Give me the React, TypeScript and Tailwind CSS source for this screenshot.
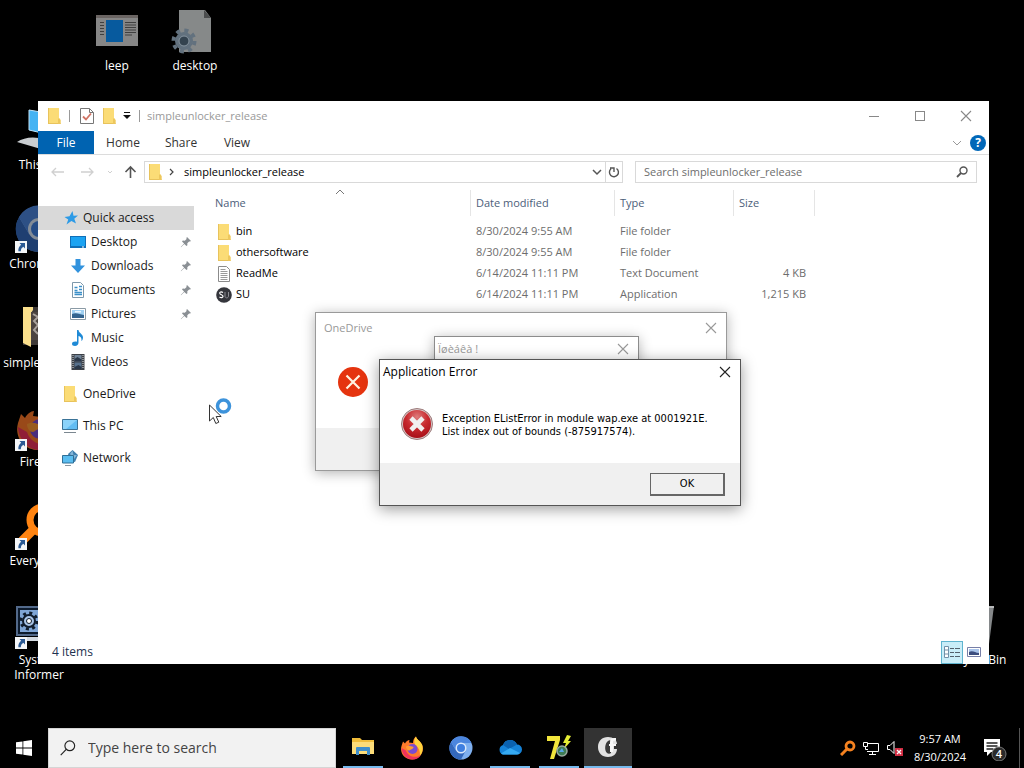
import type { ReactNode } from "react";

const UI = "font-['Open_Sans','Noto_Sans',sans-serif]";

function Folder({ className = "h-4 w-4" }: { className?: string }) {
  return (
    <svg viewBox="0 0 16 16" className={className}>
      <path d="M2 0h11v10l1.500 2v4H2z" fill="#fbdc76" />
      <path d="M2 0h1v16H2zM2 15h12.500v1H2z" fill="#e8c35c" />
      <path d="M12 11l1-1 1.500 2v4H12z" fill="#edc75e" />
    </svg>
  );
}

function Cross({ size, color }: { size: number; color: string }) {
  return (
    <svg width={size} height={size} viewBox="0 0 12 12" fill="none">
      <path d="M1 1l10 10M11 1L1 11" stroke={color} strokeWidth="1.1" />
    </svg>
  );
}

function Pin() {
  return (
    <svg viewBox="0 0 12 12" className="h-3 w-3">
      <path
        d="M7 1l4 4-1 .6-.9-.2-1.800 1.800.1 2L6.500 10 4.300 7.900 1 11.200.8 11 4.100 7.600 2 5.500l.8-.9 2 .1L6.600 3 6.400 2z"
        fill="#8a8f94"
      />
    </svg>
  );
}

function StarIcon() {
  return (
    <svg viewBox="0 0 16 16" className="h-4 w-4">
      <path
        d="M9.500 1l1 4.700 4.500-.2-3.700 3.300L13 13.500 8.400 11 3.500 14.500l1.700-5L1.500 7l5-.8z"
        fill="#2e9be6"
      />
    </svg>
  );
}

function DesktopIcon() {
  return (
    <svg viewBox="0 0 16 16" className="h-4 w-4">
      <path d="M0 2h16v12H0z" fill="#0f6fb8" />
      <path d="M1 3h14v9H1z" fill="#1ba3f2" />
      <path d="M12 12.500h2v1h-2z" fill="#fff" />
    </svg>
  );
}

function DownloadIcon() {
  return (
    <svg viewBox="0 0 16 16" className="h-4 w-4">
      <path d="M5.500 1h5v6.500H15L8 15 1 7.500h4.500z" fill="#3192dd" />
    </svg>
  );
}

function DocumentIcon() {
  return (
    <svg viewBox="0 0 16 16" className="h-4 w-4" fill="none">
      <path d="M2.500.5h8l3 3v12h-11z" fill="#fff" stroke="#7d98ab" />
      <path
        d="M4.500 5.500h3M9 4.500h3M9 7.500h3M4.500 8.500h3M4.500 10.500h7.500M4.500 12.500h7.500"
        stroke="#3a8fc9"
        strokeWidth="1.300"
      />
    </svg>
  );
}

function PictureIcon() {
  return (
    <svg viewBox="0 0 16 16" className="h-4 w-4">
      <path d="M.5 2.500h15v11H.5z" fill="#fff" stroke="#8a9aa5" />
      <path d="M2 4h12v8H2z" fill="#9fd0f2" />
      <path d="M2 8c4-2 7 0 12 1v3H2z" fill="#33648f" />
      <path d="M5 5h6v1.500H5z" fill="#eaf6ff" />
    </svg>
  );
}

function MusicIcon() {
  return (
    <svg viewBox="0 0 16 16" className="h-4 w-4">
      <path
        d="M7 0h1.500c.2 3 4.500 4 4.500 7.500 0 1.500-.7 3-1.600 3.500C12 8 10.500 6.500 8.500 6v6.500C8.500 14.500 7 16 5 16s-3-1-3-2.300C2 12 4.500 11 7 11.800z"
        fill="#1f8ad6"
      />
    </svg>
  );
}

function VideoIcon() {
  return (
    <svg viewBox="0 0 16 16" className="h-4 w-4">
      <path d="M1.500 0h13v16h-13z" fill="#3c4046" />
      <path d="M4.500 1h7v6.500h-7z" fill="#6f8296" />
      <path d="M4.500 8.500h7V15h-7z" fill="#56708c" />
      <path d="M4.500 5l3-2 4 2.500v2h-7zM4.500 13l4-2 3 2v2h-7z" fill="#2a3748" />
      <path
        d="M3 1v14M13 1v14"
        stroke="#d9dcdf"
        strokeWidth="1"
        strokeDasharray="1 1"
      />
    </svg>
  );
}

function ComputerIcon() {
  return (
    <svg viewBox="0 0 16 16" className="h-4 w-4">
      <path d="M.5 1.500h15v10H.5z" fill="#62bdf3" stroke="#3a7397" />
      <path d="M1 2h14L4 11H1z" fill="#8bd3fa" />
      <path d="M2 14h12v1H2z" fill="#7b8790" />
    </svg>
  );
}

function NetworkIcon() {
  return (
    <svg viewBox="0 0 16 16" className="h-4 w-4">
      <path d="M6 4l4.500-4L16 5l-3 7-5-1z" fill="#3f7fae" />
      <path d="M8 4l2.500-3.500 1 4.500 3.500 0-3 4z" fill="#83b5d8" />
      <path d="M.5 5.500h11v7.500H.5z" fill="#5bbdf0" stroke="#2f6f96" />
      <path d="M3 15h6v1H3z" fill="#8996a0" />
    </svg>
  );
}

function TextFileIcon() {
  return (
    <svg viewBox="0 0 16 16" className="h-4 w-4" fill="none">
      <path d="M2.500.5h8l3 3v12h-11z" fill="#fff" stroke="#8b8b8b" />
      <path
        d="M4.500 3.500h5M4.500 5.500h7M4.500 7.500h7M4.500 9.500h7M4.500 11.500h7M4.500 13.500h7"
        stroke="#9a9a9a"
      />
    </svg>
  );
}

function SuIcon() {
  return (
    <svg viewBox="0 0 16 16" className="h-4 w-4" fill="none">
      <circle cx="8" cy="8" r="7.800" fill="#35363c" />
      <path
        d="M7 5.500C5 4.300 3.500 5 3.800 6.400 4.200 8 7 7.500 7 9.300c0 1.500-2 1.800-3.500.7"
        stroke="#fff"
        strokeWidth="1.200"
      />
      <path d="M9 5v4c0 2.500 3.500 2.500 3.500 0V5" stroke="#8b8b92" />
    </svg>
  );
}

function Shortcut() {
  return (
    <svg viewBox="0 0 12 12" className="absolute bottom-0 left-0 h-3 w-3">
      <path d="M0 0h12v12H0z" fill="#f4f6f8" />
      <path
        d="M4.500 2H10v5.500L8.300 5.800C6.500 7 6 8 5.800 10.200H3.400C3 7.500 4.200 5.500 6.200 3.800z"
        fill="#2b5a94"
      />
    </svg>
  );
}

function LeepIcon() {
  return (
    <svg viewBox="0 0 48 48" className="h-12 w-12" fill="none">
      <path d="M3 8h42v31H3z" fill="#868686" />
      <path d="M3 8h42v3H3z" fill="#6b6563" />
      <path d="M13 13h17v22H13z" fill="#075a9e" />
      <path
        d="M7 15.500h4M7 18.500h4M7 21.500h4M7 24.500h4M7 27.500h4M32 15.500h11M32 18h11M32 20.500h11M32 23h11M32 25.500h11M32 28h7"
        stroke="#3f3f3f"
      />
    </svg>
  );
}

function DesktopIniIcon() {
  return (
    <svg viewBox="0 0 48 48" className="h-12 w-12" fill="none">
      <path d="M8 3h26l6 8v34H8z" fill="#868989" />
      <path d="M33 3v8h7z" fill="#4b4d4e" />
      <circle cx="13" cy="34" r="9" fill="#62717e" />
      <circle
        cx="13"
        cy="34"
        r="10.500"
        stroke="#62717e"
        strokeWidth="4"
        strokeDasharray="4 4.250"
      />
      <circle cx="13" cy="34" r="5" fill="#34434f" stroke="#8795a0" />
    </svg>
  );
}

function PcBigIcon() {
  return (
    <svg viewBox="0 0 48 48" className="h-12 w-12">
      <path d="M14 4l30 5v22l-30-7z" fill="#45b3f3" stroke="#bfe4fa" />
      <path d="M2 36q9-6 22-4l18 5-16 6z" fill="#c9cdd0" />
    </svg>
  );
}

function ChromiumIcon({ className = "h-12 w-12" }: { className?: string }) {
  return (
    <svg viewBox="0 0 48 48" className={className}>
      <circle cx="24" cy="24" r="23" fill="#7fb0ef" />
      <path d="M4 12A23 23 0 0 0 24 47l9-17-9-6-10 5z" fill="#3469bd" />
      <path d="M4 12a23 23 0 0 1 41 2H24L14 29z" fill="#4c86de" />
      <circle cx="24" cy="24" r="11" fill="#dbe9fb" />
      <circle cx="24" cy="24" r="8" fill="#3f7fe0" />
    </svg>
  );
}

function FirefoxIcon({ className = "h-12 w-12" }: { className?: string }) {
  return (
    <svg viewBox="0 0 48 48" className={className}>
      <path
        d="M6 11l4 4c2-4 6-7 9-7l-1 5 8 1C26 8 28 4 32 1c1 6 8 8 12 16 6 14-4 29-19 30C9 48-1 34 3 20z"
        fill="#ff7a2b"
      />
      <path d="M32 1c1 6 8 8 12 16 3 8 1 17-4 22 0-9-2-15-8-20-5-5-4-13 0-18z" fill="#ffd43d" />
      <path d="M3 24c1 14 11 23 22 23 8 0 14-4 17-9-10 7-26 4-30-9z" fill="#f0325c" />
      <circle cx="25" cy="26" r="10" fill="#7b4bd0" />
      <path d="M12 21c6-3 10 0 15 1 0 4-5 4-7 6-3 3-8-1-8-7z" fill="#ff9a35" />
    </svg>
  );
}

function ArchiveFolderIcon() {
  return (
    <svg viewBox="0 0 48 48" className="h-12 w-12">
      <path d="M8 3h30v38H8z" fill="#3f3a38" />
      <path d="M8 3h10v3l-2 3v34l-8-4z" fill="#fbe08c" />
      <path d="M16 8h11v28H16z" fill="#4c4441" />
      <path d="M18 10l5 3-4 4 4 4-4 5 4 4" fill="none" stroke="#a9a29c" strokeWidth="2" />
    </svg>
  );
}

function EverythingIcon() {
  return (
    <svg viewBox="0 0 48 48" className="h-12 w-12" fill="none">
      <circle cx="28" cy="18" r="13" stroke="#ff8412" strokeWidth="7" />
      <path d="M18 28L7 39" stroke="#ff8412" strokeWidth="9" />
    </svg>
  );
}

function InformerIcon() {
  return (
    <svg viewBox="0 0 48 48" className="h-12 w-12" fill="none">
      <path d="M2 6h42v28H2z" fill="#7fa5d5" stroke="#52698a" strokeWidth="2" />
      <path d="M4 8h38v24H4z" stroke="#0c1a2c" strokeWidth="2" />
      <circle cx="14" cy="20" r="6" fill="#a8c3e6" stroke="#111d2d" strokeWidth="2" />
      <circle
        cx="14"
        cy="20"
        r="8"
        stroke="#111d2d"
        strokeWidth="3"
        strokeDasharray="3 3.280"
      />
      <circle cx="14" cy="20" r="2.500" fill="#fff" stroke="#111d2d" />
      <path d="M12 36h24v4H12z" fill="#d5dbe2" />
    </svg>
  );
}

function BinIcon() {
  return (
    <svg viewBox="0 0 48 48" className="h-12 w-12">
      <path d="M6 5h37l-5 38H11z" fill="#85888a" />
      <path d="M6 5h37v2H6z" fill="#b9bbbc" />
    </svg>
  );
}

const shortcuts: {
  label: string;
  cell: string;
  icon: ReactNode;
  linked?: boolean;
}[] = [
  { label: "leep", cell: "col-start-2 row-start-1", icon: <LeepIcon /> },
  { label: "desktop", cell: "col-start-3 row-start-1", icon: <DesktopIniIcon /> },
  { label: "This PC", cell: "col-start-1 row-start-2", icon: <PcBigIcon /> },
  {
    label: "Chromium",
    cell: "col-start-1 row-start-3",
    icon: <ChromiumIcon className="h-12 w-12 opacity-60" />,
    linked: true,
  },
  { label: "simpleunlo...", cell: "col-start-1 row-start-4", icon: <ArchiveFolderIcon /> },
  {
    label: "Firefox",
    cell: "col-start-1 row-start-5",
    icon: <FirefoxIcon className="h-12 w-12 opacity-60" />,
    linked: true,
  },
  { label: "Everything", cell: "col-start-1 row-start-6", icon: <EverythingIcon />, linked: true },
  { label: "System Informer", cell: "col-start-1 row-start-7", icon: <InformerIcon />, linked: true },
  { label: "Recycle Bin", cell: "-col-end-1 row-start-7", icon: <BinIcon /> },
];

function Desktop() {
  return (
    <div className="grid auto-rows-[99px] grid-cols-[repeat(auto-fill,78px)] pt-[7px]">
      {shortcuts.map((s) => (
        <button
          key={s.label}
          className={`flex flex-col items-center text-xs leading-[15px] text-white ${s.cell}`}
        >
          <span className="relative block">
            {s.icon}
            {s.linked && <Shortcut />}
          </span>
          <span className="mt-[3px] px-1">{s.label}</span>
        </button>
      ))}
    </div>
  );
}

const quickAccess = [
  { label: "Desktop", icon: <DesktopIcon />, pinned: true },
  { label: "Downloads", icon: <DownloadIcon />, pinned: true },
  { label: "Documents", icon: <DocumentIcon />, pinned: true },
  { label: "Pictures", icon: <PictureIcon />, pinned: true },
  { label: "Music", icon: <MusicIcon />, pinned: false },
  { label: "Videos", icon: <VideoIcon />, pinned: false },
];

const places = [
  { label: "OneDrive", icon: <Folder /> },
  { label: "This PC", icon: <ComputerIcon /> },
  { label: "Network", icon: <NetworkIcon /> },
];

const files = [
  { name: "bin", date: "8/30/2024 9:55 AM", type: "File folder", size: "", icon: <Folder /> },
  { name: "othersoftware", date: "8/30/2024 9:55 AM", type: "File folder", size: "", icon: <Folder /> },
  { name: "ReadMe", date: "6/14/2024 11:11 PM", type: "Text Document", size: "4 KB", icon: <TextFileIcon /> },
  { name: "SU", date: "6/14/2024 11:11 PM", type: "Application", size: "1,215 KB", icon: <SuIcon /> },
];

function Sidebar() {
  return (
    <nav className="w-[156px] shrink-0 pt-[17px]">
      <a href="#quick" className="flex h-6 items-center gap-1 bg-[#d9d9d9] pl-[25px]">
        <StarIcon />
        Quick access
      </a>
      {quickAccess.map((q) => (
        <a key={q.label} href="#folder" className="flex h-6 items-center gap-[5px] pl-8">
          {q.icon}
          <span className="flex-1">{q.label}</span>
          {q.pinned && (
            <span className="mr-[2px]">
              <Pin />
            </span>
          )}
        </a>
      ))}
      {places.map((p) => (
        <a key={p.label} href="#place" className="mt-2 flex h-6 items-center gap-[5px] pl-6">
          {p.icon}
          {p.label}
        </a>
      ))}
    </nav>
  );
}

function FileTable() {
  const th = "h-[26px] border-r border-[#e5e5e5] pl-[5px] font-normal";
  return (
    <table className="ml-3 table-fixed border-separate border-spacing-0 text-left text-[11px] text-[#6d6d6d]">
      <thead className="text-[#4c607a]">
        <tr>
          <th className={`relative w-[265px] ${th}`}>
            <span className="pl-1">Name</span>
            <svg viewBox="0 0 10 6" className="absolute -top-px left-[129px] h-[6px] w-[10px]" fill="none">
              <path d="M1 5l4-4 4 4" stroke="#777" />
            </svg>
          </th>
          <th className={`w-36 ${th}`}>Date modified</th>
          <th className={`w-[119px] ${th}`}>Type</th>
          <th className={`w-[81px] ${th}`}>Size</th>
        </tr>
      </thead>
      <tbody>
        <tr aria-hidden="true">
          <td className="h-[5px]" colSpan={4} />
        </tr>
        {files.map((f) => (
          <tr key={f.name} className="h-[21px]">
            <td className="pl-[10px] text-black">
              <span className="flex items-center gap-1">
                {f.icon}
                {f.name}
              </span>
            </td>
            <td className="pl-[5px]">{f.date}</td>
            <td className="pl-[5px]">{f.type}</td>
            <td className="pr-[9px] text-right">{f.size}</td>
          </tr>
        ))}
      </tbody>
    </table>
  );
}

function Explorer() {
  return (
    <section className="absolute top-[101px] right-[35px] bottom-16 left-[38px] flex flex-col bg-white text-xs text-[#1a1a1a]">
      <header className="flex h-[30px] items-center">
        <div className="flex flex-1 items-center text-[11px] text-[#999]">
          <Folder className="ml-2 h-4 w-4" />
          <span className="ml-[7px] h-3 w-px bg-[#999]" />
          <svg viewBox="0 0 14 16" className="ml-[10px] h-4 w-[14px]" fill="none">
            <path d="M.5.5h9l4 4v11H.5z" fill="#fff" stroke="#777" />
            <path d="M9.500.5v4h4" stroke="#777" />
            <path d="M3 8.500l3 3 5-6" stroke="#d07465" strokeWidth="1.800" />
          </svg>
          <Folder className="ml-[7px] h-4 w-4" />
          <svg viewBox="0 0 8 8" className="ml-[6px] h-2 w-2">
            <path d="M1 0h6v1H1zM0 3h8L4 7z" fill="#111" />
          </svg>
          <span className="mr-[7px] ml-2 h-3 w-px bg-[#999]" />
          simpleunlocker_release
        </div>
        <button aria-label="Minimize" className="flex h-full w-[46px] items-center justify-center">
          <span className="h-px w-[10px] bg-[#888]" />
        </button>
        <button aria-label="Maximize" className="flex h-full w-[46px] items-center justify-center">
          <span className="h-[10px] w-[10px] border border-[#888]" />
        </button>
        <button aria-label="Close" className="flex h-full w-[46px] items-center justify-center">
          <Cross size={12} color="#888" />
        </button>
      </header>

      <div className="flex h-6 items-stretch border-b border-[#dcdcdc] text-[#333]">
        <button className="w-14 bg-[#0063b1] text-white">File</button>
        <button className="w-[58px]">Home</button>
        <button className="w-[58px]">Share</button>
        <button className="w-[54px]">View</button>
        <span className="flex-1" />
        <button aria-label="Expand ribbon" className="px-2">
          <svg viewBox="0 0 10 6" className="h-[6px] w-[10px]" fill="none">
            <path d="M1 1l4 4 4-4" stroke="#999" />
          </svg>
        </button>
        <button
          aria-label="Help"
          className="mr-[3px] h-4 w-4 self-center rounded-full bg-[#0067b8] text-xs leading-4 font-bold text-white"
        >
          ?
        </button>
      </div>

      <div className="flex h-[34px] items-center text-[11px]">
        <div className="flex w-[106px] items-center">
          <svg viewBox="0 0 106 14" className="h-[14px] w-[106px]" fill="none">
            <path d="M14 7h12M18 3l-4 4 4 4M43 7h12M51 3l4 4-4 4" stroke="#d0d0d0" strokeWidth="1.300" />
            <path d="M70 6l2 2 2-2" stroke="#d0d0d0" />
            <path d="M92.500 13V2M87.500 7l5-5 5 5" stroke="#555" strokeWidth="1.600" />
          </svg>
        </div>
        <div className="flex h-[22px] flex-[477] items-center border border-[#d9d9d9] text-black">
          <Folder className="ml-[2px] h-4 w-4" />
          <svg viewBox="0 0 6 8" className="mx-[6px] h-2 w-[6px]" fill="none">
            <path d="M1 1l3 3-3 3" stroke="#444" strokeWidth="1.200" />
          </svg>
          <span className="flex-1 pl-[3px]">simpleunlocker_release</span>
          <svg viewBox="0 0 10 7" className="mr-[3px] h-[7px] w-[10px]" fill="none">
            <path d="M1 1l4 4 4-4" stroke="#555" strokeWidth="1.500" />
          </svg>
          <button
            aria-label="Refresh"
            className="flex h-full w-[17px] items-center justify-center border-l border-[#d9d9d9]"
          >
            <svg viewBox="0 0 12 12" className="h-3 w-3" fill="none">
              <path d="M3 2.800a4.500 4.500 0 1 0 5.500-.300M2 2h4v4" stroke="#555" strokeWidth="1.400" />
            </svg>
          </button>
        </div>
        <label className="mr-3 ml-3 flex h-[22px] flex-[324] items-center border border-[#d9d9d9] pr-2 pl-2">
          <input
            aria-label="Search simpleunlocker_release"
            placeholder="Search simpleunlocker_release"
            className="min-w-0 flex-1 outline-none placeholder:text-[#6d6d6d]"
          />
          <svg viewBox="0 0 12 12" className="h-3 w-3" fill="none">
            <circle cx="7.500" cy="4.500" r="3.500" stroke="#555" strokeWidth="1.400" />
            <path d="M5 7L1 11" stroke="#555" strokeWidth="1.800" />
          </svg>
        </label>
      </div>

      <div className="flex min-h-0 flex-1">
        <Sidebar />
        <div className="pt-px">
          <FileTable />
        </div>
      </div>

      <footer className="flex h-6 items-center pr-1 pl-[14px] text-[#1e3250]">
        <span className="flex-1">4 items</span>
        <button
          aria-label="Details"
          className="flex h-[23px] w-[22px] items-center justify-center border border-[#5fb4cf] bg-[#c9edf8]"
        >
          <svg viewBox="0 0 18 14" className="h-[14px] w-[18px]" fill="none">
            <path d="M1.500 1.500h4v11h-4zM1.500 5h4M1.500 9h4" fill="#fff" stroke="#7290a8" />
            <path d="M7 3.500h4M12 3.500h5M7 7.500h4M12 7.500h5M7 11.500h4M12 11.500h5" stroke="#53606c" />
          </svg>
        </button>
        <button aria-label="Large icons" className="flex h-[23px] w-[22px] items-center justify-center">
          <svg viewBox="0 0 14 12" className="h-3 w-[14px]">
            <path d="M.5 1.500h13v9H.5z" fill="#fff" stroke="#777fa8" />
            <path d="M2 3h10v6H2z" fill="#a9c4ea" />
            <path d="M2 6c4-2 6 1 10 1v2H2z" fill="#3c4d7e" />
          </svg>
        </button>
      </footer>
    </section>
  );
}

function OneDriveDialog() {
  return (
    <div
      role="dialog"
      aria-label="OneDrive"
      className="absolute top-[312px] left-[315px] flex h-[159px] w-[412px] flex-col border border-[#9a9a9a] bg-white text-xs shadow-[0_2px_12px_rgba(0,0,0,0.3)]"
    >
      <div className="flex h-[30px] items-center justify-between pr-[9px] pl-2 text-[11px] text-[#999]">
        OneDrive
        <button aria-label="Close">
          <Cross size={12} color="#999" />
        </button>
      </div>
      <div className="flex flex-1 items-center pb-2 pl-[22px]">
        <svg viewBox="0 0 30 30" className="h-[30px] w-[30px]">
          <circle cx="15" cy="15" r="15" fill="#e5340f" />
          <path d="M8.500 8.500l13 13M21.500 8.500l-13 13" stroke="#fff3e2" strokeWidth="2.200" />
        </svg>
      </div>
      <div className="h-[42px] bg-[#f0f0f0]" />
    </div>
  );
}

function MojibakeDialog() {
  return (
    <div
      role="dialog"
      aria-label="Ïøèáêà !"
      className="absolute top-[336px] left-[434px] h-[120px] w-[205px] border border-[#8c8c8c] bg-white text-[11px] shadow-[0_2px_12px_rgba(0,0,0,0.3)]"
    >
      <div className="flex h-6 items-center justify-between pr-[9px] pl-[3px] text-[#999]">
        Ïøèáêà !
        <button aria-label="Close">
          <Cross size={12} color="#999" />
        </button>
      </div>
    </div>
  );
}

function ErrorDialog() {
  return (
    <div
      role="dialog"
      aria-label="Application Error"
      className="absolute top-[359px] left-[379px] flex h-[147px] w-[362px] flex-col border border-[#555] bg-white text-xs text-black shadow-[0_3px_14px_rgba(0,0,0,0.4)]"
    >
      <div className="flex h-6 items-center justify-between pr-[9px] pl-[3px]">
        Application Error
        <button aria-label="Close">
          <Cross size={12} color="#222" />
        </button>
      </div>
      <div className="flex flex-1 items-center gap-[9px] pl-[21px]">
        <svg viewBox="0 0 32 32" className="h-8 w-8">
          <defs>
            <radialGradient id="stop" cx="50%" cy="25%" r="75%">
              <stop offset="0" stopColor="#dd7d7d" />
              <stop offset="0.5" stopColor="#c92b30" />
              <stop offset="1" stopColor="#a80f18" />
            </radialGradient>
          </defs>
          <circle cx="16" cy="16" r="15.500" fill="#d9c6c6" stroke="#9c7b7b" />
          <circle cx="16" cy="16" r="14" fill="url(#stop)" />
          <path d="M10 10l12 12M22 10L10 22" stroke="#f1efef" strokeWidth="4.600" />
        </svg>
        <p className="pt-[2px] font-['DejaVu_Sans_Condensed','DejaVu_Sans',sans-serif] text-[11px] leading-[13px]">
          Exception EListError in module wap.exe at 0001921E.
          <br />
          List index out of bounds (-875917574).
        </p>
      </div>
      <div className="flex h-[42px] items-center justify-end bg-[#f0f0f0] pr-[15px]">
        <button className="h-[23px] w-[75px] border border-r-2 border-b-2 border-[#666] bg-[#f0f0f0] pt-[2px] font-['DejaVu_Sans_Condensed','DejaVu_Sans',sans-serif] text-[11px]">
          OK
        </button>
      </div>
    </div>
  );
}

function Cursor() {
  return (
    <svg viewBox="0 0 26 30" className="absolute top-[397px] left-[208px] h-[30px] w-[26px]">
      <path d="M1.500 8v16l3.800-3.500 2.500 6 3-1.300-2.600-5.700h5z" fill="#fff" stroke="#333" />
      <circle cx="15.500" cy="9" r="6" fill="#fff" stroke="#3d93db" strokeWidth="3.500" />
    </svg>
  );
}

const apps: { name: string; state: "idle" | "running" | "active"; icon: ReactNode }[] = [
  {
    name: "File Explorer",
    state: "running",
    icon: (
      <svg viewBox="0 0 24 24" className="h-6 w-6">
        <path d="M1 3h8l2 2h12v14H1z" fill="#f0bd3a" />
        <path d="M1 7h22v12H1z" fill="#fcdc79" />
        <path d="M5 13q0-1 1-1h12q1 0 1 1v7h-3v-4H8v4H5z" fill="#3f8ecb" />
      </svg>
    ),
  },
  { name: "Firefox", state: "idle", icon: <FirefoxIcon className="h-6 w-6" /> },
  { name: "Chromium", state: "idle", icon: <ChromiumIcon className="h-6 w-6" /> },
  {
    name: "OneDrive",
    state: "running",
    icon: (
      <svg viewBox="0 0 24 24" className="h-6 w-6">
        <path d="M5 19.500a5 5 0 0 1 0-9.500 7.500 7.500 0 0 1 14-.500 5 5 0 0 1 0 10z" fill="#1583d8" />
        <path d="M5 10a7.500 7.500 0 0 1 14-.500L11 14z" fill="#0b62b0" />
        <path d="M3 18.500l9-5.500 10 5q-1 1.500-3 1.500H5q-1 0-2-1z" fill="#35aaf2" />
      </svg>
    ),
  },
  {
    name: "7+ Taskbar Tweaker",
    state: "running",
    icon: (
      <svg viewBox="0 0 24 24" className="h-6 w-6">
        <path d="M0 1h13v4L7 24H3l5-18H0z" fill="#f2e63c" />
        <path d="M20 0l-4 8h3l-2 6 7-8h-3l3-5z" fill="#e6ee35" />
        <circle cx="15" cy="16" r="5" fill="#3e7c54" stroke="#98aba0" strokeWidth="1.500" />
        <path d="M12 17l3-4 2 4z" fill="#58a5e8" />
      </svg>
    ),
  },
  {
    name: "wap",
    state: "active",
    icon: (
      <svg viewBox="0 0 24 24" className="h-6 w-6" fill="none">
        <path
          d="M12 2C6 2 2 6 2 12s4 10 10 10c5 0 9-3 9-8h-3V9h3c0-4-4-7-9-7z"
          fill="#e2e2e2"
        />
        <path d="M12 6c-3 2-4 9-1 12 1 1 3 1 4 0v-7h3V9h-3V6c0-1-2-1-3 0z" fill="#3a3a3a" />
        <path d="M18 3c-3 0-4 1.500-4 4v2h-1v2h1v6h3v-6h3V9h-3V7c0-1 1-1.500 3-1V3z" fill="#f7f7f7" />
      </svg>
    ),
  },
];

function Taskbar() {
  return (
    <footer className="relative flex h-10 shrink-0 items-stretch bg-black text-xs text-white">
      <button aria-label="Start" className="flex w-12 items-center justify-center">
        <svg viewBox="0 0 16 16" className="h-4 w-4">
          <path d="M0 2.300L6.500 1.400v6.100H0zM7.300 1.300L16 0v7.500H7.300zM0 8.400h6.500v6.200L0 13.700zM7.300 8.400H16V16l-8.700-1.300z" fill="#fff" />
        </svg>
      </button>
      <label className="flex w-72 items-center gap-3 border border-[#d5d5d5] bg-[#f2f2f2] pl-[11px]">
        <svg viewBox="0 0 18 18" className="h-[18px] w-[16px]" fill="none">
          <circle cx="11" cy="6.500" r="5.500" stroke="#222" strokeWidth="1.300" />
          <path d="M7 10.500L.8 17" stroke="#222" strokeWidth="1.300" />
        </svg>
        <input
          aria-label="Type here to search"
          placeholder="Type here to search"
          className="min-w-0 flex-1 text-sm outline-none placeholder:text-[#444]"
        />
      </label>
      <div className="ml-[3px] flex gap-px">
        {apps.map((a) => (
          <button
            key={a.name}
            aria-label={a.name}
            className={`flex w-12 flex-col items-center ${a.state === "active" ? "bg-[#333]" : ""}`}
          >
            <span className="flex flex-1 items-center">{a.icon}</span>
            {a.state === "running" && <span className="h-[2px] w-10 bg-[#76b9ed]" />}
            {a.state === "active" && <span className="h-[2px] w-full bg-[#76b9ed]" />}
          </button>
        ))}
      </div>
      <div className="ml-auto flex items-center">
        <svg viewBox="0 0 16 16" className="h-4 w-4" fill="none">
          <circle cx="10" cy="6" r="4" stroke="#f58220" strokeWidth="2.800" />
          <path d="M7 9l-6 6" stroke="#f58220" strokeWidth="3" />
        </svg>
        <svg viewBox="0 0 18 16" className="ml-[6px] h-4 w-[18px]" fill="none">
          <path d="M5 3.500h11.500v8H5M10.500 11.500v3M7 14.500h7M1.500 2.500h4v4h-4zM3.500 6.500v3h2.500" stroke="#fff" />
        </svg>
        <svg viewBox="0 0 18 16" className="ml-[6px] h-4 w-[18px]" fill="none">
          <path d="M1.500 5.500H4l4-4v12l-4-4H1.500z" stroke="#fff" />
          <path d="M9 8h8v8H9z" fill="#d12d43" />
          <path d="M11 10l4 4M15 10l-4 4" stroke="#fff" strokeWidth="1.300" />
        </svg>
        <div className="ml-2 w-[56px] text-center text-[11px] leading-[18px]">
          <div>9:57 AM</div>
          <div>8/30/2024</div>
        </div>
        <button aria-label="Notifications" className="ml-[14px]">
          <svg viewBox="0 0 26 26" className="h-[26px] w-[26px]" fill="none">
            <path d="M2 4h16v13H9l-4 4v-4H2z" fill="#fff" />
            <path d="M4.500 8h11M4.500 11h11M4.500 14h7" stroke="#222" strokeWidth="1.300" />
            <circle cx="17" cy="19" r="7" fill="#2a2a2a" stroke="#777" />
            <text x="17" y="23" fill="#fff" fontSize="11" fontWeight="600" textAnchor="middle">
              4
            </text>
          </svg>
        </button>
        <span className="mr-1 ml-[11px] h-10 w-px bg-[#555]" />
      </div>
    </footer>
  );
}

export default function App() {
  return (
    <div className={`flex h-screen w-full flex-col overflow-hidden bg-black ${UI}`}>
      <main className="relative flex-1">
        <Desktop />
        <Explorer />
        <OneDriveDialog />
        <MojibakeDialog />
        <ErrorDialog />
        <Cursor />
      </main>
      <Taskbar />
    </div>
  );
}
